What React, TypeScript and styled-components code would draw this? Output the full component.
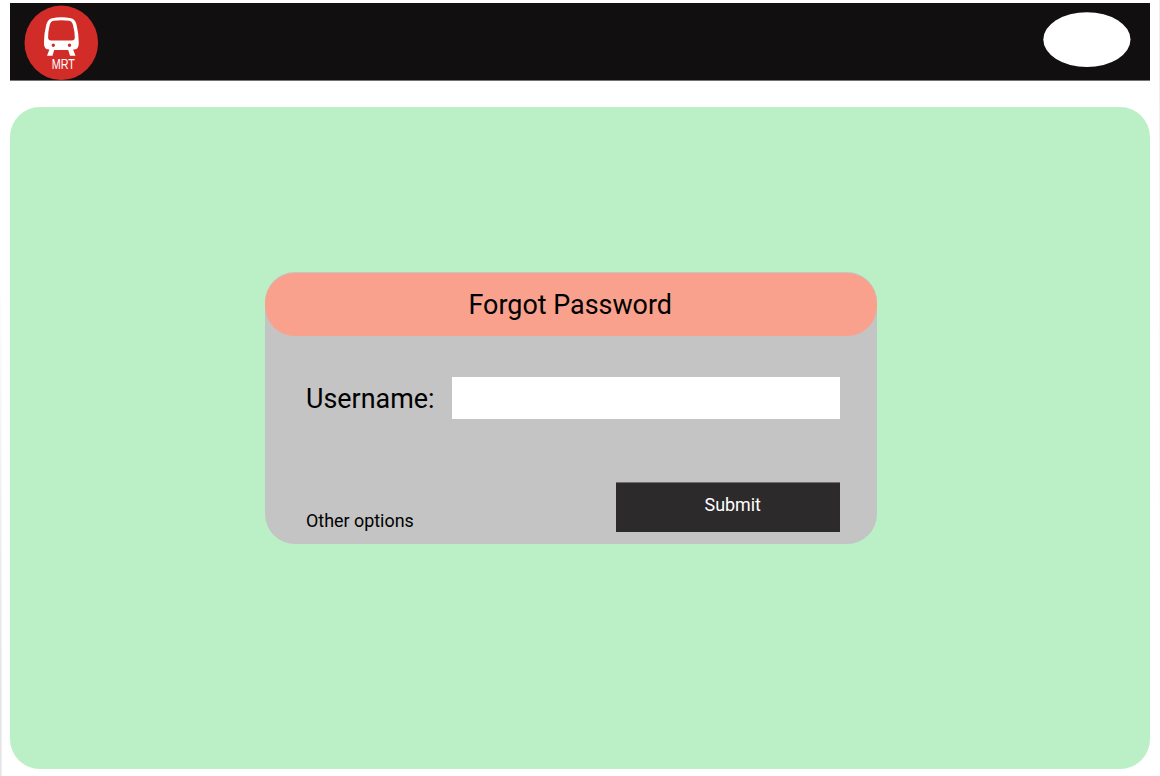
import React from "react";
import styled, { createGlobalStyle } from "styled-components";

const GlobalStyle = createGlobalStyle`
  * { box-sizing: border-box; }
  body { margin: 0; background: #fff; overflow: hidden; }
`;

const Page = styled.div`
  display: flex;
  flex-direction: column;
  width: 1160px;
  height: 776px;
  padding: 3px 10px 7px;
  font-family: Roboto, "Liberation Sans", sans-serif;
  color: #000;
  background:
    linear-gradient(to bottom, #fff 260px, #e4e4e4 700px) left / 1.6px 100% no-repeat,
    linear-gradient(to bottom, #ececec, #fff 620px) right / 1px 100% no-repeat,
    #fff;
`;

const TopBar = styled.header`
  display: flex;
  justify-content: space-between;
  height: 78px;
  padding: 0 19px 0 14px;
  border: solid #747273;
  border-width: 0 0 1px;
  background: #110f10;
`;

const Logo = styled.svg`
  width: 75px;
  height: 78px;
`;

const Avatar = styled.svg`
  width: 88px;
  height: 56px;
  margin-top: 9px;
`;

const Main = styled.main`
  display: flex;
  flex: 1;
  align-items: flex-start;
  margin-top: 26px;
  padding: 165px 0 0 254.5px;
  border-radius: 30px;
  background: #bbf0c6;
`;

const Card = styled.form`
  display: flex;
  flex-direction: column;
  width: 612.5px;
  height: 272px;
  padding-top: 1px;
  border-radius: 30px;
  background: #c4c4c4;
`;

const CardHeader = styled.h1`
  height: 63px;
  margin: 0;
  border-radius: 30px;
  background: #f9a18d;
  font-size: 26.9px;
  font-weight: 400;
  line-height: 64.5px;
  text-indent: -1px;
  text-align: center;
`;

const Field = styled.label`
  display: flex;
  align-items: center;
  justify-content: space-between;
  margin: 41px 37.5px 0 41.5px;
  font-size: 26.9px;
`;

const FieldName = styled.span`
  padding-top: 2px;
`;

const Input = styled.input`
  width: 387.5px;
  height: 42px;
  padding: 0 10px;
  border: 0;
  outline: 0;
  background: #fff;
`;

const Footer = styled.div`
  display: flex;
  justify-content: space-between;
  margin: 63.4px 37.5px 0 41.5px;
`;

const Options = styled.span`
  margin-top: 28px;
  font-size: 17.9px;
  line-height: 21px;
`;

const Submit = styled.button`
  width: 223.5px;
  height: 49.5px;
  padding: 0 0 6px 10px;
  border: solid #6e6c6d;
  border-width: 1px 0 0;
  background: #2d2a2b;
  color: #fff;
  font: 400 17.9px Roboto, "Liberation Sans", sans-serif;
`;

export default function App() {
  return (
    <>
      <GlobalStyle />
      <Page>
        <TopBar>
          <Logo viewBox="24 3 75 78" aria-label="MRT">
            <ellipse cx="61.3" cy="42.8" rx="36.8" ry="37.2" fill="#d22c28" />
            <path
              fill="#fff"
              fillRule="evenodd"
              d="M52 18.3Q61.3 16.3 71 18.3Q75.5 19.5 76.6 25Q78.7 34 78.7 41.5V44Q78.7 49.6 73.5 49.6H73.1L75.5 55.8H70L68.2 50H54.2L52.5 55.8H47L49.4 49.6Q44 49.6 44 44V41.5Q44 34 46.2 25Q47.5 19.5 52 18.3ZM53.5 20.8Q50.3 21.5 49.6 25.5Q48 32 48.1 37.5Q48.2 40.5 51 40.5H71.7Q74.8 40.5 74.8 37.5Q74.8 32 73.1 25.5Q72.3 21.5 69.3 20.8Q61.3 19.6 53.5 20.8ZM53.3 43.5A1.7 1.7 0 1 0 53.3 46.9A1.7 1.7 0 1 0 53.3 43.5ZM69.5 43.5A1.7 1.7 0 1 0 69.5 46.9A1.7 1.7 0 1 0 69.5 43.5Z"
            />
            <text
              transform="translate(51.8 68.8) scale(0.7 1)"
              fill="#fff"
              fontFamily="Liberation Sans, sans-serif"
              fontSize="15.4"
              textLength="33"
              lengthAdjust="spacingAndGlyphs"
            >
              MRT
            </text>
          </Logo>
          <Avatar viewBox="0 0 88 56">
            <ellipse cx="43.9" cy="27.6" rx="43.6" ry="27.4" fill="#fff" />
          </Avatar>
        </TopBar>
        <Main>
          <Card onSubmit={(e) => e.preventDefault()}>
            <CardHeader>Forgot Password</CardHeader>
            <Field>
              <FieldName>Username:</FieldName>
              <Input type="text" />
            </Field>
            <Footer>
              <Options>Other options</Options>
              <Submit type="submit">Submit</Submit>
            </Footer>
          </Card>
        </Main>
      </Page>
    </>
  );
}
